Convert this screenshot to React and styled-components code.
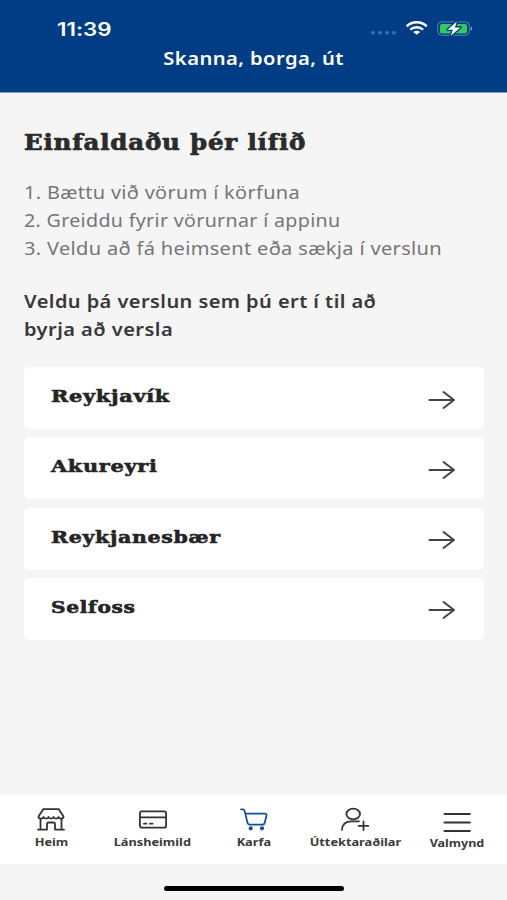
import React from "react";
import styled, { createGlobalStyle } from "styled-components";

const GlobalStyle = createGlobalStyle`
  * {
    box-sizing: border-box;
  }

  body {
    margin: 0;
    background-color: #f5f5f5;
    font-family: "Noto Sans", "Open Sans", sans-serif;
    font-variant-ligatures: none;
  }
`;

const Screen = styled.div`
  display: flex;
  flex-direction: column;
  width: 507px;
  height: 900px;
  overflow: hidden;
  background-color: #f5f5f5;
`;

const Wide = styled.span`
  display: inline-block;
  white-space: nowrap;
  transform: scaleX(${({ $stretch }) => $stretch || 1});
  transform-origin: ${({ $origin }) => $origin || "left"} center;
`;

const Header = styled.header`
  height: 93px;
  flex-shrink: 0;
  background-color: #003d85;
  border-bottom: 1px solid #7d9dc4;
  color: #fff;
`;

const StatusBar = styled.div`
  display: flex;
  align-items: center;
  justify-content: space-between;
  height: 46px;
  padding: 11px 34px 0 57px;
`;

const Time = styled.div`
  padding-top: 2px;
  font-family: Inter, sans-serif;
  font-size: 18px;
  font-weight: 600;
  line-height: 24px;
`;

const StatusIcons = styled.div`
  display: flex;
  align-items: center;
`;

const HeaderTitle = styled.h1`
  margin: 0;
  font-size: 18px;
  font-weight: 600;
  letter-spacing: 0.4px;
  line-height: 25px;
  text-align: center;
`;

const Content = styled.main`
  flex: 1;
  padding: 35px 23px 0 24px;
`;

const Title = styled.h2`
  margin: 0 0 20px;
  color: #2b2b2b;
  font-family: "DejaVu Serif", serif;
  font-size: 21.5px;
  font-weight: 700;
  letter-spacing: 0.7px;
  line-height: 30px;
  -webkit-text-stroke: 0.7px #2b2b2b;
`;

const Steps = styled.ol`
  margin: 0 0 25px;
  padding: 0;
  list-style: none;
  color: #757575;
  font-size: 18px;
  letter-spacing: 0.3px;
  line-height: 28px;
`;

const Prompt = styled.p`
  margin: 0 0 24px;
  color: #383838;
  font-size: 18px;
  font-weight: 600;
  letter-spacing: 0.4px;
  line-height: 28px;
`;

const StoreList = styled.div`
  display: flex;
  flex-direction: column;
  gap: 8.3px;
`;

const StoreCard = styled.button`
  display: flex;
  align-items: center;
  justify-content: space-between;
  width: 100%;
  height: 62px;
  padding: 0 28px 0 27px;
  border: none;
  border-radius: 5px;
  background-color: #fff;
  color: #242424;
  cursor: pointer;
`;

const StoreName = styled.span`
  padding-bottom: 4px;
  font-family: "DejaVu Serif", serif;
  font-size: 17.5px;
  font-weight: 700;
  letter-spacing: 0.6px;
  line-height: 24px;
  -webkit-text-stroke: 0.6px #242424;
`;

const ArrowIcon = styled.svg`
  margin-top: 3px;
  flex-shrink: 0;
`;

const TabBar = styled.nav`
  display: flex;
  height: 69px;
  flex-shrink: 0;
  background-color: #fff;
`;

const Tab = styled.a`
  display: flex;
  flex: 1 1 0;
  flex-direction: column;
  align-items: center;
  padding: ${({ $low }) => ($low ? "12px" : "11px")} 0 0 1px;
  color: #3a3a3a;
  font-size: 11px;
  font-weight: 700;
  line-height: 16px;
`;

const TabIcon = styled.svg`
  width: 32px;
  height: 28px;
  margin-top: ${({ $raise }) => ($raise ? "-1px" : 0)};
  overflow: visible;
  fill: none;
  stroke: ${({ $active }) => ($active ? "#124f9c" : "#333")};
  stroke-width: ${({ $weight }) => $weight || 1.8};
  stroke-linecap: round;
  stroke-linejoin: round;
`;

const TabLabel = styled(Wide)`
  margin-top: ${({ $low }) => ($low ? 0 : "1px")};
`;

const HomeArea = styled.footer`
  display: flex;
  justify-content: center;
  height: 36px;
  flex-shrink: 0;
  padding-top: 22px;
`;

const HomeIndicator = styled.div`
  width: 180px;
  height: 5px;
  border-radius: 3px;
  background-color: #000;
`;

const steps = [
  { text: "1. Bættu við vörum í körfuna", stretch: 1.106 },
  { text: "2. Greiddu fyrir vörurnar í appinu", stretch: 1.09 },
  { text: "3. Veldu að fá heimsent eða sækja í verslun", stretch: 1.112 },
];

const stores = [
  { name: "Reykjavík", stretch: 1.19 },
  { name: "Akureyri", stretch: 1.19 },
  { name: "Reykjanesbær", stretch: 1.17 },
  { name: "Selfoss", stretch: 1.15 },
];

const ShopIcon = () => (
  <TabIcon viewBox="0 0 32 28" $raise>
    <path d="M8.200 4.200h15.600l4.700 7.300c0 2.700-4.300 2.700-5 .5-.8 2.100-4.200 2.100-5 0-.8 2.100-4.200 2.100-5 0-.8 2.100-4.200 2.100-5 0-.7 2.200-5 2.200-5-.5z" />
    <path d="M5.500 14v10.500M26.500 14v10.500M3 24.600h9M20 24.600h9M12 24.600v-5.600a1.500 1.500 0 0 1 1.500-1.500h5a1.500 1.500 0 0 1 1.500 1.500v5.600" />
  </TabIcon>
);

const CardIcon = () => (
  <TabIcon viewBox="0 0 32 28" $raise>
    <rect x="2.900" y="6.400" width="26.200" height="16.300" rx="2" />
    <path d="M3 12.300h26M7 18.700h2.500M13 18.700h2.500" />
  </TabIcon>
);

const CartIcon = () => (
  <TabIcon viewBox="0 0 32 28" $active $raise>
    <path d="M3 4.300h1.800c1 0 1.600.6 1.800 1.600l3 12.200c.3 1 .9 1.500 1.800 1.500h13.500M7.500 8.700h19.200c1.400 0 2.100.8 1.800 2.100l-1.700 6.600c-.4 1.400-1.200 2.200-2.600 2.200" />
    <circle cx="12.700" cy="23.300" r="1.200" fill="#124f9c" />
    <circle cx="24" cy="23.300" r="1.200" fill="#124f9c" />
  </TabIcon>
);

const AddUserIcon = () => (
  <TabIcon viewBox="0 0 32 28" $raise>
    <ellipse cx="14.200" cy="9" rx="6.800" ry="5.300" />
    <path d="M3 24.800c.3-5.500 4-8.500 9.500-8.500H20M24.500 16.500v8.600M19.500 20.800h9.800" />
  </TabIcon>
);

const MenuIcon = () => (
  <TabIcon viewBox="0 0 32 28" $weight={2.1}>
    <path d="M3.500 7h25.300M3.500 15.500h25.300M3.500 24h25.300" />
  </TabIcon>
);

const tabs = [
  { label: "Heim", Icon: ShopIcon, stretch: 1.16 },
  { label: "Lánsheimild", Icon: CardIcon, stretch: 1.16 },
  { label: "Karfa", Icon: CartIcon, stretch: 1.16 },
  { label: "Úttektaraðilar", Icon: AddUserIcon, stretch: 1.16 },
  { label: "Valmynd", Icon: MenuIcon, stretch: 1.14, low: true },
];

export default function App() {
  return (
    <>
      <GlobalStyle />
      <Screen>
        <Header>
          <StatusBar>
            <Time>
              <Wide $stretch={1.24}>11:39</Wide>
            </Time>
            <StatusIcons>
              <svg width="102" height="20" viewBox="0 0 102 20">
                <g fill="#386bab">
                  <rect x="0" y="12" width="4" height="3.500" rx="1.500" />
                  <rect x="7" y="12" width="4" height="3.500" rx="1.500" />
                  <rect x="14" y="12" width="4" height="3.500" rx="1.500" />
                  <rect x="21" y="12" width="4" height="3.500" rx="1.500" />
                </g>
                <g fill="none" stroke="#fff" strokeWidth="2.500">
                  <path d="M35.700 7.400c5.500-5.400 14.500-5.400 20 0" />
                  <path d="M39.300 10.700c3.600-3.300 9.200-3.300 12.800 0" />
                </g>
                <path d="M42.200 12.900c2.100-1.700 4.900-1.700 7 0l-3.500 2.900z" fill="#fff" />
                <rect x="66.700" y="2.900" width="31.600" height="13.400" rx="4" fill="none" stroke="#5a83b8" />
                <path d="M99.700 7.500c1.800.5 1.800 3.700 0 4.200z" fill="#8fabd0" />
                <rect x="69" y="5" width="27" height="9.500" rx="2" fill="#31cc58" />
                <path d="M85.800 2.500l-9.300 8.200h5.300l-2 6 9.700-8.300h-5.600z" fill="#fff" stroke="#003d85" strokeWidth="2.600" strokeLinejoin="round" paintOrder="stroke" />
              </svg>
            </StatusIcons>
          </StatusBar>
          <HeaderTitle>
            <Wide $stretch={1.12} $origin="center">Skanna, borga, út</Wide>
          </HeaderTitle>
        </Header>

        <Content>
          <Title>
            <Wide $stretch={1.14}>Einfaldaðu þér lífið</Wide>
          </Title>
          <Steps>
            {steps.map(({ text, stretch }) => (
              <li key={text}>
                <Wide $stretch={stretch}>{text}</Wide>
              </li>
            ))}
          </Steps>
          <Prompt>
            <Wide $stretch={1.11}>Veldu þá verslun sem þú ert í til að</Wide>
            <br />
            <Wide $stretch={1.113}>byrja að versla</Wide>
          </Prompt>
          <StoreList>
            {stores.map(({ name, stretch }) => (
              <StoreCard key={name} type="button">
                <StoreName>
                  <Wide $stretch={stretch}>{name}</Wide>
                </StoreName>
                <ArrowIcon width="28" height="20" viewBox="0 0 28 20" fill="none" stroke="#444" strokeWidth="2" strokeLinecap="round" strokeLinejoin="round">
                  <path d="M1.500 10h24.500M15.500 2l10.500 8-10.500 8" />
                </ArrowIcon>
              </StoreCard>
            ))}
          </StoreList>
        </Content>

        <TabBar>
          {tabs.map(({ label, Icon, stretch, low }) => (
            <Tab key={label} $low={low}>
              <Icon />
              <TabLabel $stretch={stretch} $origin="center" $low={low}>{label}</TabLabel>
            </Tab>
          ))}
        </TabBar>
        <HomeArea>
          <HomeIndicator />
        </HomeArea>
      </Screen>
    </>
  );
}
